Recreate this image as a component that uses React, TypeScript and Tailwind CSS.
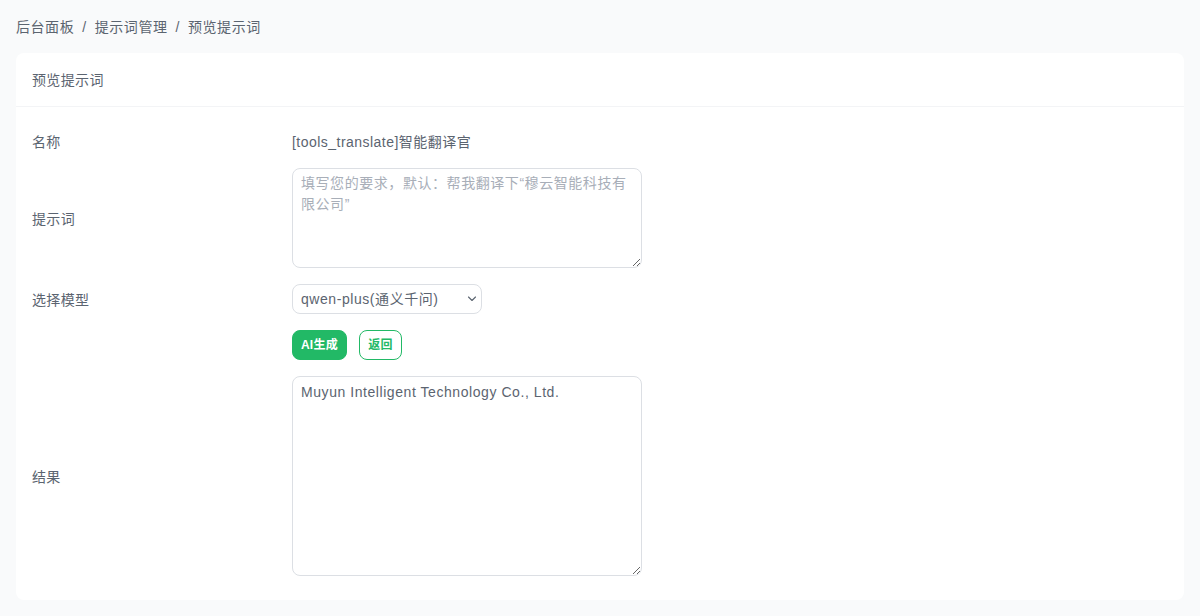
import React from "react";

const font = "font-['Liberation_Sans','Noto_Sans_CJK_SC',sans-serif]";

function Row({ label, children }: { label: string; children: React.ReactNode }) {
  return (
    <div className="flex items-center">
      <div className="h-[21px] w-[260px] shrink-0 text-sm leading-[23px] tracking-wide text-[#5b6470]">{label}</div>
      <div className="w-[350px]">{children}</div>
    </div>
  );
}

export default function App() {
  return (
    <div className={`${font} min-h-[616px] bg-[#f9fafb] px-4 pt-4 pb-4 tracking-[0.56px] text-[#5b6470]`}>
      <nav className="flex h-[21px] items-center gap-[8px] pt-[2px] text-sm leading-[21px]">
        <span>后台面板</span>
        <span>/</span>
        <span>提示词管理</span>
        <span>/</span>
        <span>预览提示词</span>
      </nav>
      <div className="mt-4 overflow-hidden rounded-lg bg-white">
        <div className="flex h-[54px] items-center border-b border-[#f3f4f6] px-4 text-sm tracking-wide">预览提示词</div>
        <div className="flex flex-col gap-4 px-4 pt-6 pb-6">
          <Row label="名称">
            <div className="h-[21px] text-sm leading-[23px] tracking-[0.47px]">[tools_translate]智能翻译官</div>
          </Row>
          <Row label="提示词">
            <textarea
              className="block h-[100px] w-full rounded-lg border border-[#dcdfe4] bg-white px-2 py-1 text-sm leading-[21px] tracking-[0.56px] text-[#5b6470] outline-none placeholder:text-[#a8aeb8]"
              placeholder="填写您的要求，默认：帮我翻译下“穆云智能科技有限公司”"
            />
          </Row>
          <Row label="选择模型">
            <div className="relative w-[190px]">
              <select className="block h-[30px] w-full appearance-none rounded-lg border border-[#dcdfe4] bg-white px-2 text-sm tracking-[0.56px] text-[#5b6470] outline-none">
                <option>qwen-plus(通义千问)</option>
              </select>
              <svg className="pointer-events-none absolute right-[5px] top-[10px]" width="10" height="10" viewBox="0 0 10 10" fill="none" stroke="#5b6470" strokeWidth="1.1" strokeLinecap="round" strokeLinejoin="round">
                <path d="M1.5 3l3.5 3.5L8.5 3" />
              </svg>
            </div>
          </Row>
          <Row label="">
            <div className="flex gap-3">
              <button className="h-[30px] w-[55px] rounded-lg border border-[#22b966] bg-[#22b966] text-xs font-semibold tracking-[0.3px] text-white">AI生成</button>
              <button className="h-[30px] w-[43px] rounded-lg border border-[#22b966] bg-white text-xs font-semibold tracking-[0.3px] text-[#22b966]">返回</button>
            </div>
          </Row>
          <Row label="结果">
            <textarea
              className="block h-[200px] w-full rounded-lg border border-[#dcdfe4] bg-white px-2 pt-[5px] pb-[3px] text-sm leading-[21px] tracking-[0.56px] text-[#5b6470] outline-none"
              defaultValue="Muyun Intelligent Technology Co., Ltd."
            />
          </Row>
        </div>
      </div>
    </div>
  );
}
